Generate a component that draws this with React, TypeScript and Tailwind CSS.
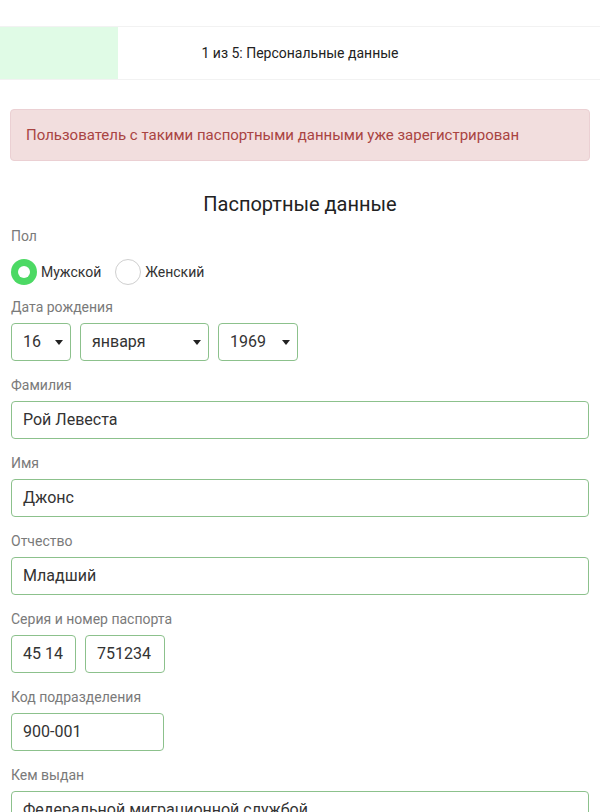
function Label({ children }: { children: React.ReactNode }) {
  return <div className="text-[14px] leading-[18px] text-[#7a7a7a] mb-[7px]">{children}</div>;
}

function Field({ value, className = 'w-full' }: { value: string; className?: string }) {
  return (
    <div className={`h-[38px] flex items-center px-[11px] whitespace-nowrap overflow-hidden rounded border border-[#8cc18c] text-[16px] text-[#333] bg-white ${className}`}>
      {value}
    </div>
  );
}

function Select({ value, className }: { value: string; className: string }) {
  return (
    <div className={`h-[38px] flex items-center justify-between pl-[11px] pr-[7px] rounded border border-[#8cc18c] text-[16px] text-[#333] ${className}`}>
      <span>{value}</span>
      <span className="w-0 h-0 border-l-[4px] border-r-[4px] border-t-[5px] border-l-transparent border-r-transparent border-t-[#222]" />
    </div>
  );
}

export default function App() {
  return (
    <div className="min-h-screen bg-white font-['Roboto',sans-serif] text-[#222]">
      {/* прогресс */}
      <div className="pt-[26px]">
        <div className="relative h-[54px] border-y border-[#f2f2f2] flex items-center justify-center">
          <div className="absolute left-0 top-0 bottom-0 w-[118px] bg-[#e0fbe6]" />
          <span className="relative text-[14px] text-[#222]">1 из 5: Персональные данные</span>
        </div>
      </div>

      <div className="px-[11px]">
        {/* ошибка */}
        <div className="mt-[29px] mx-[-1px] h-[52px] flex items-center px-[15px] rounded bg-[#f2dede] border border-[#ebd0d3] text-[#a94442] text-[15px]">
          Пользователь с такими паспортными данными уже зарегистрирован
        </div>

        <h2 className="mt-[30px] text-center text-[20px] leading-[26px] text-[#222]">Паспортные данные</h2>

        <div className="mt-[10px] text-[14px] leading-[18px] text-[#7a7a7a]">Пол</div>
        <div className="mt-[14px] flex items-center h-[26px] text-[14px] text-[#333]">
          <span className="w-[26px] h-[26px] rounded-full bg-[#4cd964] flex items-center justify-center">
            <span className="w-[12px] h-[12px] rounded-full bg-white" />
          </span>
          <span className="ml-[4px]">Мужской</span>
          <span className="ml-[14px] w-[26px] h-[26px] rounded-full border border-[#cfcfcf]" />
          <span className="ml-[4px]">Женский</span>
        </div>

        <div className="mt-[13px]">
          <Label>Дата рождения</Label>
          <div className="flex gap-[9px]">
            <Select value="16" className="w-[60px]" />
            <Select value="января" className="w-[129px]" />
            <Select value="1969" className="w-[80px]" />
          </div>
        </div>

        <div className="mt-[15px] flex flex-col gap-[15px]">
          <div>
            <Label>Фамилия</Label>
            <Field value="Рой Левеста" />
          </div>
          <div>
            <Label>Имя</Label>
            <Field value="Джонс" />
          </div>
          <div>
            <Label>Отчество</Label>
            <Field value="Младший" />
          </div>
          <div>
            <Label>Серия и номер паспорта</Label>
            <div className="flex gap-[9px]">
              <Field value="45 14" className="w-[65px]" />
              <Field value="751234" className="w-[80px]" />
            </div>
          </div>
          <div>
            <Label>Код подразделения</Label>
            <Field value="900-001" className="w-[153px]" />
          </div>
          <div>
            <Label>Кем выдан</Label>
            <Field value="Федеральной миграционной службой" />
          </div>
        </div>
      </div>
    </div>
  );
}
